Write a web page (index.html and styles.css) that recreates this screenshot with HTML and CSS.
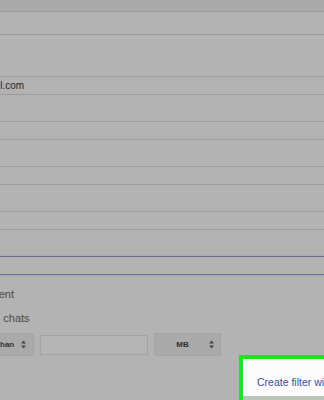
FILE: index.html
```html
<!DOCTYPE html>
<html lang="en">
<head>
    <meta charset="UTF-8">
    <meta name="viewport" content="width=device-width, initial-scale=1.0">
    <title>Create filter</title>
    <link rel="stylesheet" href="styles.css">
</head>
<body>
    <div class="dialog">
        <div class="dialog-head"></div>
        <div class="search-row"></div>

        <div class="fields">
            <div class="field"><span class="field-value">user@gmail.com</span></div>
            <div class="field"></div>
            <div class="field"></div>
            <div class="field"></div>
            <div class="field field-focus"></div>
        </div>

        <div class="checks">
            <label class="check"><span class="check-box"></span>Has attachment</label>
            <label class="check"><span class="check-box"></span>Don't include chats</label>
        </div>

        <div class="size-row">
            <div class="select select-op">
                <span>greater than</span>
                <svg width="5" height="9" viewBox="0 0 5 9"><path d="M0 3.6L2.5 0.4L5 3.6Z M0 5.4L2.5 8.6L5 5.4Z" fill="#474747"/></svg>
            </div>
            <div class="size-input"></div>
            <div class="select select-unit">
                <span>MB</span>
                <svg width="5" height="9" viewBox="0 0 5 9"><path d="M0 3.6L2.5 0.4L5 3.6Z M0 5.4L2.5 8.6L5 5.4Z" fill="#474747"/></svg>
            </div>
        </div>

        <div class="footer">
            <div class="highlight">
                <div class="filter-link">Create filter with this search</div>
                <div class="filter-rest"></div>
            </div>
        </div>
    </div>
</body>
</html>
```

FILE: styles.css
```css
/* Gmail search options, dimmed */
body {
    margin: 0;
    background-color: #b3b3b3;
    font-family: "Liberation Sans", Arial, sans-serif;
    overflow: hidden;
    width: 324px;
    height: 400px;
}

.dialog {
    height: 400px;
}

.dialog-head {
    height: 11px;
    background-color: #aaaaaa;
    border-bottom: 1px solid #989898;
}

.search-row {
    height: 22px;
    border-bottom: 1px solid #9a9a9a;
}

.fields {
    margin: 0 -2px;
}

.field {
    height: 17px;
    border: 1px solid #9c9c9c;
    margin-top: 26px;
    overflow: hidden;
    white-space: nowrap;
}

.field:first-child {
    margin-top: 41px;
}

.field-value {
    display: block;
    margin-left: -50px;
    font-size: 10px;
    line-height: 17px;
    color: #262626;
}

.field-focus {
    border-color: #69718c;
    box-shadow: 0 0 2px rgba(90, 110, 190, 0.45);
}

.checks {
    display: flex;
    flex-direction: column;
    gap: 11px;
    padding-top: 13px;
    margin-left: -80px;
}

.check {
    display: flex;
    align-items: center;
    gap: 4px;
    font-size: 11px;
    line-height: 13px;
    color: #4a4a4a;
}

.check-box {
    width: 11px;
    height: 11px;
    border: 1px solid #999;
}

.size-row {
    display: flex;
    align-items: center;
    gap: 6px;
    height: 23px;
    margin-top: 8px;
}

.select {
    display: flex;
    align-items: center;
    box-sizing: border-box;
    height: 23px;
    background-color: #aaaaaa;
    border: 1px solid #a2a2a2;
    border-radius: 2px;
    font-size: 8px;
    font-weight: bold;
    color: #303030;
}

.select-op {
    margin-left: -39px;
    padding: 0 7px 0 6px;
    gap: 7px;
}

.select-unit {
    width: 67px;
    padding: 0 6px 0 21px;
    justify-content: space-between;
}

.size-input {
    box-sizing: border-box;
    width: 108px;
    height: 20px;
    border: 1px solid #a3a3a3;
    background-color: #b4b4b4;
}

.footer {
    margin-top: -1px;
    padding-left: 239px;
}

.highlight {
    width: 200px;
    border: 4px solid #22e022;
    border-bottom: none;
    background-color: #fbfbfb;
}

.filter-link {
    height: 37px;
    box-sizing: border-box;
    padding: 17px 0 0 14px;
    font-size: 10.5px;
    line-height: 13px;
    color: #3d4f9f;
    white-space: nowrap;
}

.filter-rest {
    height: 10px;
    background-color: #bcc6b8;
}
```
